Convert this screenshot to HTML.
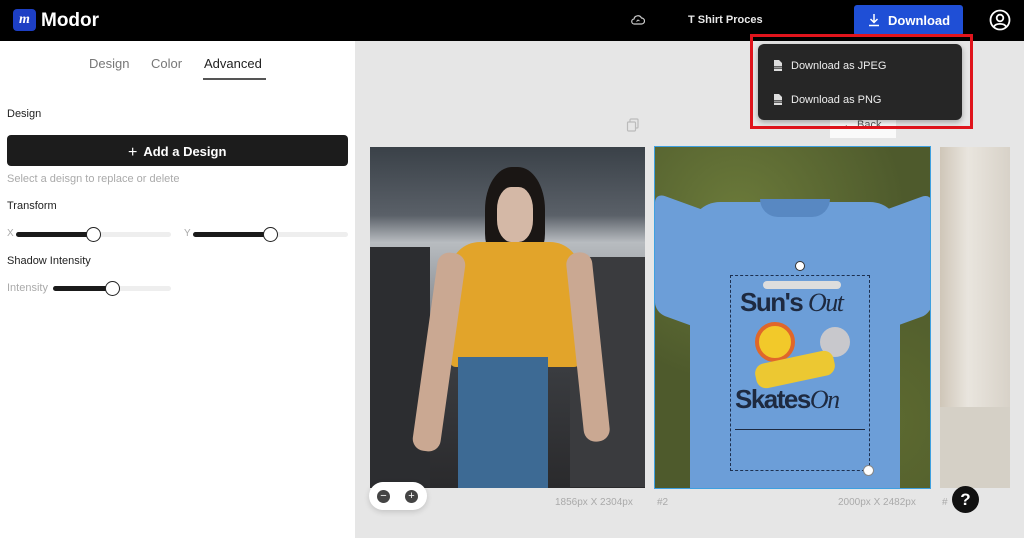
<!DOCTYPE html>
<html><head><meta charset="utf-8"><style>
*{box-sizing:border-box;margin:0;padding:0}
body{width:1024px;height:538px;overflow:hidden;background:#e6e6e6;font-family:"Liberation Sans",sans-serif;position:relative}
.abs{position:absolute}
.top{left:0;top:0;width:1024px;height:41px;background:#000}
.side{left:0;top:41px;width:355px;height:497px;background:#fff}
.t{position:absolute;white-space:nowrap}
.track{position:absolute;height:5px;border-radius:3px;background:#eee}
.fill{position:absolute;left:0;top:0;height:5px;border-radius:3px;background:#1a1a1a}
.knob{position:absolute;width:15px;height:15px;border-radius:50%;background:#fff;border:1.5px solid #222;top:-5px}
</style></head><body>
<div class="abs top"></div>
<div class="abs" style="left:13px;top:9px;width:23px;height:22px;background:#1d3fc4;border-radius:4px;color:#fff;font:italic bold 14px 'Liberation Serif',serif;text-align:center;line-height:21px">m</div>
<div class="t" style="left:41px;top:10px;color:#fff;font-weight:bold;font-size:19px">Modor</div>
<svg class="abs" style="left:631px;top:14px" width="14" height="12" viewBox="0 0 14 12"><path d="M3.5 10h7a3 3 0 0 0 0-6 4 4 0 0 0-7.5 1A2.5 2.5 0 0 0 3.5 10z" fill="none" stroke="#ccc" stroke-width="1.2"/><path d="M5.5 7.5l1.5-1.5 1.5 1" fill="none" stroke="#ccc" stroke-width="1"/></svg>
<div class="t" style="left:688px;top:14px;color:#e8e8e8;font-size:11px;font-weight:bold">T Shirt Proces</div>
<div class="abs" style="left:854px;top:5px;width:109px;height:31px;background:#1f4fd6;border-radius:3px"></div>
<svg class="abs" style="left:867px;top:13px" width="14" height="14" viewBox="0 0 14 14"><path d="M7 1v8M3.5 6l3.5 3.5L10.5 6M2 12.5h10" fill="none" stroke="#fff" stroke-width="1.5"/></svg>
<div class="t" style="left:888px;top:13px;color:#fff;font-size:13px;font-weight:bold">Download</div>
<svg class="abs" style="left:989px;top:9px" width="22" height="22" viewBox="0 0 22 22"><circle cx="11" cy="11" r="9.5" fill="none" stroke="#fff" stroke-width="1.8"/><circle cx="11" cy="9" r="3.3" fill="none" stroke="#fff" stroke-width="1.8"/><path d="M5 17.5c2-3.5 10-3.5 12 0" fill="none" stroke="#fff" stroke-width="1.8"/></svg>

<div class="abs side"></div>
<div class="t" style="left:89px;top:56px;color:#777;font-size:13px">Design</div>
<div class="t" style="left:151px;top:56px;color:#777;font-size:13px">Color</div>
<div class="t" style="left:204px;top:56px;color:#222;font-size:13px">Advanced</div>
<div class="abs" style="left:203px;top:78px;width:63px;height:2px;background:#555"></div>
<div class="t" style="left:7px;top:108px;color:#222;font-size:11px">Design</div>
<div class="abs" style="left:7px;top:135px;width:341px;height:31px;background:#1c1c1c;border-radius:4px"></div>
<div class="t" style="left:128px;top:143px;color:#fff;font-size:13px;font-weight:bold"><span style="font-weight:normal;font-size:16px;margin-right:6px;position:relative;top:1px">+</span>Add a Design</div>
<div class="t" style="left:7px;top:173px;color:#aaa;font-size:11px">Select a deisgn to replace or delete</div>
<div class="t" style="left:7px;top:200px;color:#222;font-size:11px">Transform</div>
<div class="t" style="left:7px;top:228px;color:#aaa;font-size:10px">X</div>
<div class="track" style="left:16px;top:232px;width:155px"><div class="fill" style="width:78px"></div><div class="knob" style="left:70px"></div></div>
<div class="t" style="left:184px;top:228px;color:#aaa;font-size:10px">Y</div>
<div class="track" style="left:193px;top:232px;width:155px"><div class="fill" style="width:78px"></div><div class="knob" style="left:70px"></div></div>
<div class="t" style="left:7px;top:255px;color:#222;font-size:11px">Shadow Intensity</div>
<div class="t" style="left:7px;top:282px;color:#aaa;font-size:11px">Intensity</div>
<div class="track" style="left:53px;top:286px;width:118px"><div class="fill" style="width:60px"></div><div class="knob" style="left:52px"></div></div>

<svg class="abs" style="left:626px;top:118px" width="14" height="14" viewBox="0 0 14 14"><rect x="4" y="1" width="8" height="9" rx="1" fill="none" stroke="#bbb" stroke-width="1.2"/><rect x="1.5" y="4" width="8" height="9" rx="1" fill="#e6e6e6" stroke="#bbb" stroke-width="1.2"/></svg>
<div class="abs" style="left:830px;top:112px;width:66px;height:26px;background:#fafafa"></div>
<div class="t" style="left:843px;top:119px;color:#555;font-size:11px">← Back</div>

<div class="abs" style="left:370px;top:147px;width:275px;height:341px;background:linear-gradient(180deg,#3a4148 0%,#5a6068 20%,#b8bcc0 28%,#8f9398 45%,#3a3c40 65%,#2a2a2c 100%);overflow:hidden">
 <div class="abs" style="left:0;top:100px;width:60px;height:240px;background:#2c2d30"></div>
 <div class="abs" style="left:200px;top:110px;width:75px;height:230px;background:#3a3b3e"></div>
 <div class="abs" style="left:115px;top:20px;width:60px;height:95px;background:#1a1614;border-radius:45% 45% 30% 30%"></div>
 <div class="abs" style="left:127px;top:40px;width:36px;height:55px;background:#d4b8a6;border-radius:40%"></div>
 <div class="abs" style="left:80px;top:95px;width:130px;height:125px;background:#e2a42a;border-radius:30px 30px 6px 6px"></div>
 <div class="abs" style="left:88px;top:210px;width:90px;height:131px;background:#3d6a94"></div>
 <div class="abs" style="left:55px;top:105px;width:28px;height:200px;background:#caa892;border-radius:12px;transform:rotate(8deg)"></div>
 <div class="abs" style="left:205px;top:105px;width:26px;height:190px;background:#caa892;border-radius:12px;transform:rotate(-6deg)"></div>
</div>
<div class="abs" style="left:369px;top:482px;width:58px;height:28px;background:#fff;border-radius:14px;box-shadow:0 2px 6px rgba(0,0,0,.15)"></div>
<div class="abs" style="left:377px;top:490px;width:13px;height:13px;border-radius:50%;background:#444;color:#fff;font-size:11px;line-height:12px;text-align:center">−</div>
<div class="abs" style="left:405px;top:490px;width:13px;height:13px;border-radius:50%;background:#444;color:#fff;font-size:11px;line-height:12px;text-align:center">+</div>
<div class="t" style="left:555px;top:497px;color:#aaa;font-size:10px">1856px X 2304px</div>
<div class="t" style="left:657px;top:497px;color:#aaa;font-size:10px">#2</div>

<div class="abs" style="left:654px;top:146px;width:277px;height:343px;border:1px solid #3ea0e0;background:#4e5a2c;overflow:hidden">
 <div class="abs" style="left:0;top:0;width:277px;height:343px;background:radial-gradient(circle at 30% 20%,#6b7a3a,transparent 50%),radial-gradient(circle at 80% 80%,#5d6a30,transparent 50%)"></div>
 <div class="abs" style="left:35px;top:55px;width:210px;height:288px;background:#6c9ed8;border-radius:30px 30px 0 0"></div>
 <div class="abs" style="left:0;top:60px;width:80px;height:120px;background:#6c9ed8;transform:skewY(20deg);border-radius:10px"></div>
 <div class="abs" style="left:200px;top:60px;width:77px;height:120px;background:#6c9ed8;transform:skewY(-20deg);border-radius:10px"></div>
 <div class="abs" style="left:105px;top:52px;width:70px;height:18px;background:#5888c2;border-radius:0 0 35px 35px"></div>
 <div class="abs" style="left:75px;top:128px;width:140px;height:196px;border:1px dashed #1d3050"></div>
 <div class="abs" style="left:140px;top:114px;width:10px;height:10px;border-radius:50%;background:#fff;border:1px solid #333"></div>
 <div class="abs" style="left:208px;top:318px;width:11px;height:11px;border-radius:50%;background:#fff;border:1px solid #888"></div>
 <div class="abs" style="left:108px;top:134px;width:78px;height:8px;background:#ddd;border-radius:4px"></div>
 <div class="t" style="left:85px;top:140px;color:#1e2a40;font-size:26px;font-weight:bold;letter-spacing:-1.5px">Sun's <i style="font-family:'Liberation Serif',serif;font-weight:normal">Out</i></div>
 <div class="abs" style="left:100px;top:175px;width:40px;height:40px;border-radius:50%;background:#f2c92a;border:4px solid #e0672a"></div>
 <div class="abs" style="left:165px;top:180px;width:30px;height:30px;border-radius:50%;background:#c8c8cc"></div>
 <div class="abs" style="left:100px;top:210px;width:80px;height:25px;background:#ecc832;border-radius:10px;transform:rotate(-12deg)"></div>
 <div class="t" style="left:80px;top:237px;color:#1e2a40;font-size:26px;font-weight:bold;letter-spacing:-1.5px">Skates<i style="font-family:'Liberation Serif',serif;font-weight:normal">On</i></div>
 <div class="abs" style="left:80px;top:282px;width:130px;height:1px;background:#1e2a40"></div>
</div>
<div class="t" style="left:838px;top:497px;color:#aaa;font-size:10px">2000px X 2482px</div>
<div class="t" style="left:942px;top:497px;color:#aaa;font-size:10px">#</div>

<div class="abs" style="left:940px;top:147px;width:70px;height:341px;background:linear-gradient(90deg,#cfc6b8,#e9e5de 40%,#d8d2c8);overflow:hidden">
 <div class="abs" style="left:0;top:260px;width:70px;height:81px;background:#d5d0c6"></div>
</div>
<div class="abs" style="left:952px;top:486px;width:27px;height:27px;border-radius:50%;background:#111;color:#fff;font-weight:bold;font-size:17px;line-height:27px;text-align:center">?</div>

<div class="abs" style="left:750px;top:34px;width:223px;height:95px;border:3px solid #e0141c"></div>
<div class="abs" style="left:758px;top:44px;width:204px;height:76px;background:#262626;border-radius:6px;box-shadow:0 2px 6px rgba(0,0,0,.3)"></div>
<svg class="abs" style="left:773px;top:60px" width="10" height="11" viewBox="0 0 10 11"><path d="M1 0h5l3 3v8H1z" fill="#ddd"/><rect x="0" y="6" width="10" height="3" fill="#262626"/><rect x="1" y="6.5" width="8" height="2" fill="#999"/></svg>
<div class="t" style="left:791px;top:60px;color:#eee;font-size:11px">Download as JPEG</div>
<svg class="abs" style="left:773px;top:94px" width="10" height="11" viewBox="0 0 10 11"><path d="M1 0h5l3 3v8H1z" fill="#ddd"/><rect x="0" y="6" width="10" height="3" fill="#262626"/><rect x="1" y="6.5" width="8" height="2" fill="#999"/></svg>
<div class="t" style="left:791px;top:94px;color:#eee;font-size:11px">Download as PNG</div>
</body></html>
